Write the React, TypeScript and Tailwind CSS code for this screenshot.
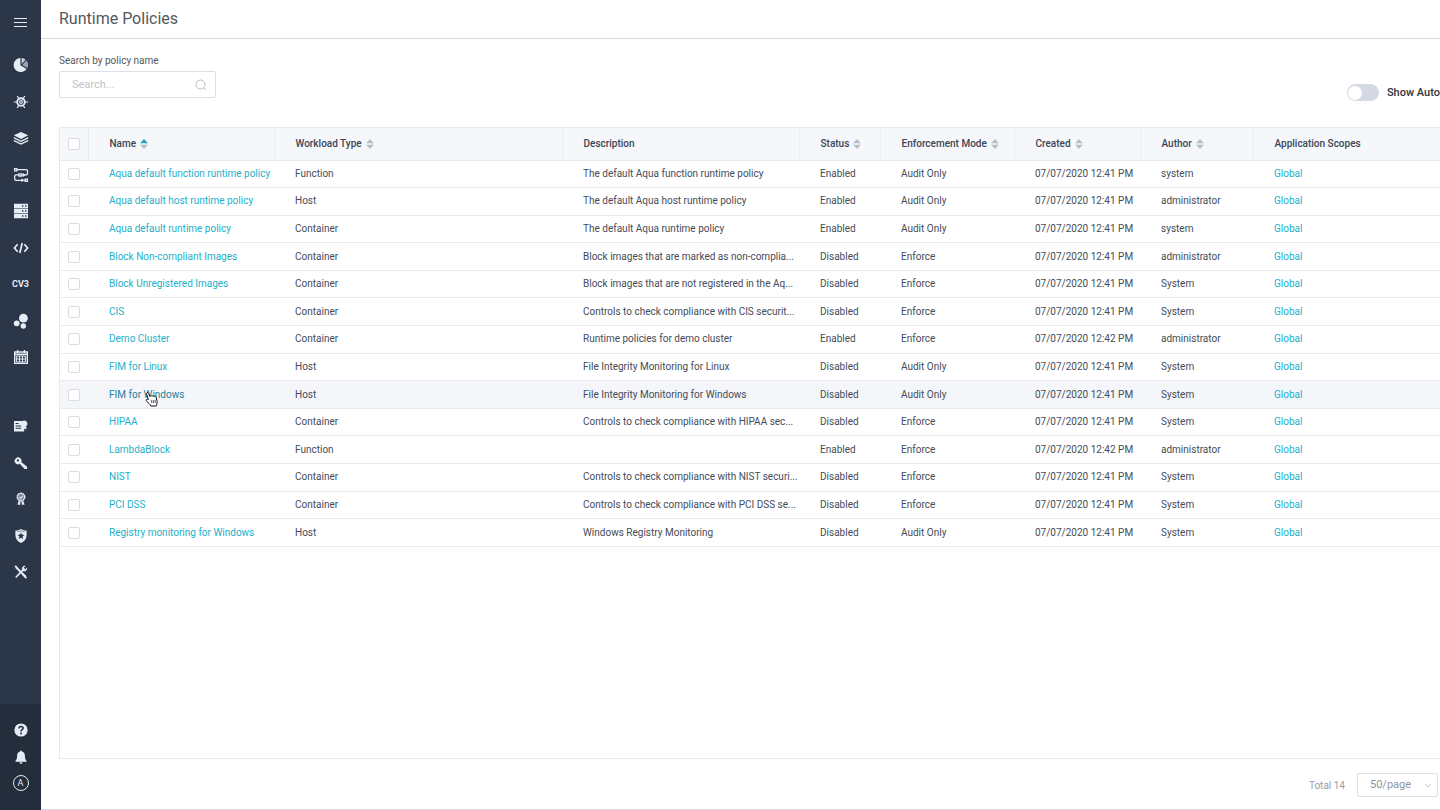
import { ReactNode, useState } from "react"

interface Policy {
  name: string
  workload: string
  description: string
  enabled: boolean
  mode: string
  created: string
  author: string
}

interface Column {
  label: string
  width: string
  sort?: "none" | "asc"
}

const EARLY = "07/07/2020 12:41 PM"
const LATE = "07/07/2020 12:42 PM"

const columns: Column[] = [
  { label: "Name", width: "w-[186px]", sort: "asc" },
  { label: "Workload Type", width: "w-[288px]", sort: "none" },
  { label: "Description", width: "w-[237px]" },
  { label: "Status", width: "w-[81px]", sort: "none" },
  { label: "Enforcement Mode", width: "w-[134px]", sort: "none" },
  { label: "Created", width: "w-[126px]", sort: "none" },
  { label: "Author", width: "w-[113px]", sort: "none" },
  { label: "Application Scopes", width: "w-auto" },
]

const policies: Policy[] = [
  { name: "Aqua default function runtime policy", workload: "Function", description: "The default Aqua function runtime policy", enabled: true, mode: "Audit Only", created: EARLY, author: "system" },
  { name: "Aqua default host runtime policy", workload: "Host", description: "The default Aqua host runtime policy", enabled: true, mode: "Audit Only", created: EARLY, author: "administrator" },
  { name: "Aqua default runtime policy", workload: "Container", description: "The default Aqua runtime policy", enabled: true, mode: "Audit Only", created: EARLY, author: "system" },
  { name: "Block Non-compliant Images", workload: "Container", description: "Block images that are marked as non-complia...", enabled: false, mode: "Enforce", created: EARLY, author: "administrator" },
  { name: "Block Unregistered Images", workload: "Container", description: "Block images that are not registered in the Aq...", enabled: false, mode: "Enforce", created: EARLY, author: "System" },
  { name: "CIS", workload: "Container", description: "Controls to check compliance with CIS securit...", enabled: false, mode: "Enforce", created: EARLY, author: "System" },
  { name: "Demo Cluster", workload: "Container", description: "Runtime policies for demo cluster", enabled: true, mode: "Enforce", created: LATE, author: "administrator" },
  { name: "FIM for Linux", workload: "Host", description: "File Integrity Monitoring for Linux", enabled: false, mode: "Audit Only", created: EARLY, author: "System" },
  { name: "FIM for Windows", workload: "Host", description: "File Integrity Monitoring for Windows", enabled: false, mode: "Audit Only", created: EARLY, author: "System" },
  { name: "HIPAA", workload: "Container", description: "Controls to check compliance with HIPAA sec...", enabled: false, mode: "Enforce", created: EARLY, author: "System" },
  { name: "LambdaBlock", workload: "Function", description: "", enabled: true, mode: "Enforce", created: LATE, author: "administrator" },
  { name: "NIST", workload: "Container", description: "Controls to check compliance with NIST securi...", enabled: false, mode: "Enforce", created: EARLY, author: "System" },
  { name: "PCI DSS", workload: "Container", description: "Controls to check compliance with PCI DSS se...", enabled: false, mode: "Enforce", created: EARLY, author: "System" },
  { name: "Registry monitoring for Windows", workload: "Host", description: "Windows Registry Monitoring", enabled: false, mode: "Audit Only", created: EARLY, author: "System" },
]

const HOVERED = "FIM for Windows"

function Icon({ children }: { children: ReactNode }) {
  return (
    <svg viewBox="0 0 16 16" className="h-4 w-4" fill="currentColor" aria-hidden="true">
      {children}
    </svg>
  )
}

const mainNav = [
  {
    label: "Dashboard",
    icon: (
      <Icon>
        <path d="M7.4.9A7.1 7.1 0 1 0 13.6 12L7.4 8.2z" />
        <path d="M8.6.9v6.2l4-4.4A7 7 0 0 0 8.6.9z" opacity=".85" />
        <path d="M13.4 3.5 9.2 8l5.1 3A7 7 0 0 0 13.4 3.5z" opacity=".6" />
      </Icon>
    ),
  },
  {
    label: "Risk Explorer",
    icon: (
      <Icon>
        <g fill="none" stroke="currentColor">
          <circle cx="8" cy="8" r="3.8" strokeWidth="1.9" />
          <circle cx="8" cy="8" r="1.4" strokeWidth="1.1" />
          <path d="M.8 8h3M12.2 8h3M4.2 2l1.6 2.6M11.8 2l-1.6 2.6M4.2 14l1.6-2.6M11.8 14l-1.6-2.6" strokeWidth="1.2" />
        </g>
      </Icon>
    ),
  },
  {
    label: "Images",
    icon: (
      <Icon>
        <path d="M8 2 15.2 5.3 8 8.9.8 5.3z" />
        <path d="M.8 7 8 10.5 15.2 7v1.6L8 12 .8 8.6z" />
        <path d="M.8 9.7 8 13.2l7.2-3.5v1.5L8 14.7.8 11.2z" />
      </Icon>
    ),
  },
  {
    label: "Functions",
    icon: (
      <Icon>
        <g fill="none" stroke="currentColor" strokeWidth="1.3">
          <path d="M1.6 1.6h2.2v2.2H1.6zM6 6.8h2.8V9H6zM12.2 12.2h2.2v2.2h-2.2z" />
          <path d="M4 2.7h9.2a1.3 1.3 0 0 1 1.3 1.3v2.6a1.3 1.3 0 0 1-1.3 1.3H9M6 7.9H3a1.3 1.3 0 0 0-1.3 1.3V12A1.3 1.3 0 0 0 3 13.3h9" />
        </g>
        <path d="M10 5.9v4l2.6-2zM8.4 11.3v4l2.6-2z" />
      </Icon>
    ),
  },
  {
    label: "Infrastructure",
    icon: (
      <Icon>
        <path fillRule="evenodd" d="M1 .8h14v4.4H1zM9 2.3v1.4h1.4V2.3zM12 2.3v1.4h1.4V2.3z" />
        <path fillRule="evenodd" d="M1 5.8h14v4.4H1zM9 7.3v1.4h1.4V7.3zM12 7.3v1.4h1.4V7.3z" />
        <path fillRule="evenodd" d="M1 10.8h14v4.4H1zM9 12.3v1.4h1.4v-1.4zM12 12.3v1.4h1.4v-1.4z" />
      </Icon>
    ),
  },
  {
    label: "Code Repositories",
    icon: (
      <Icon>
        <path d="M4.7 4.2 1.4 8l3.3 3.8M11.3 4.2 14.6 8l-3.3 3.8M9.2 3 6.8 13" fill="none" stroke="currentColor" strokeWidth="1.7" />
      </Icon>
    ),
  },
  {
    label: "Vulnerabilities",
    icon: <span className="text-[9px] leading-4 font-bold">CV3</span>,
  },
  {
    label: "Workloads",
    icon: (
      <Icon>
        <circle cx="10.4" cy="5.2" r="4.4" />
        <circle cx="3.7" cy="10.3" r="2.9" />
        <circle cx="10.3" cy="13" r="2.7" />
      </Icon>
    ),
  },
  {
    label: "Audit",
    icon: (
      <Icon>
        <path d="M1.7 3h12.6v11.4H1.7zM1.7 5.2h12.6M4.6 1v3M11.4 1v3" fill="none" stroke="currentColor" strokeWidth="1.4" />
        <path d="M3.6 7h8.8v6H3.6zM3.6 10h8.8M6.5 7v6M9.5 7v6" fill="none" stroke="currentColor" strokeWidth="1" />
      </Icon>
    ),
  },
]

const settingsNav = [
  {
    label: "Policies",
    icon: (
      <Icon>
        <path
          fillRule="evenodd"
          d="M1 3h8.6a3.2 3.2 0 1 1 1.6 6v4.6H1zM2.6 5v1h3V5zM2.6 7.4v1h5.6v-1zM2.6 9.8v1h5.6v-1z"
        />
        <path d="M10.4 8.4h3v3.2l-1.5-1-1.5 1z" />
      </Icon>
    ),
  },
  {
    label: "Secrets",
    icon: (
      <Icon>
        <path
          fillRule="evenodd"
          d="M2.8 3.5a3.3 3.3 0 0 1 5.5 3.4l5.8 4.9v2.3h-2.5l-4.9-5.3a3.3 3.3 0 0 1-3.9-5.3zM4.2 4.6a1.1 1.1 0 1 0 1.6 1.5 1.1 1.1 0 0 0-1.6-1.5z"
        />
      </Icon>
    ),
  },
  {
    label: "Compliance",
    icon: (
      <Icon>
        <circle cx="8" cy="6" r="3.7" fill="none" stroke="currentColor" strokeWidth="1.5" strokeDasharray="2 .3" />
        <path d="M6.3 6l1.3 1.3 2.2-2.4" fill="none" stroke="currentColor" strokeWidth="1.1" />
        <circle cx="8" cy="6" r="3" opacity=".45" />
        <path d="M5.4 10.3h2.1L7.1 14.3l-1-.9-1.6.6zM8.5 10.3h2.1l.9 3.7-1.6-.6-1 .9z" />
      </Icon>
    ),
  },
  {
    label: "Runtime Protection",
    icon: (
      <Icon>
        <path
          fillRule="evenodd"
          d="M8 .9c1.8 1.2 3.6 1.5 5.6 1.5v4.8c0 3.8-2.3 6.3-5.6 7.9-3.3-1.6-5.6-4.1-5.6-7.9V2.4c2 0 3.8-.3 5.6-1.5zM8 2.5c-1.3.8-2.7 1.1-4.2 1.2v.4c1.5-.1 2.9-.4 4.2-1.1 1.3.7 2.7 1 4.2 1.1v-.4C10.7 3.6 9.3 3.3 8 2.5zM8 4.4 7 6.6l-2.4.3 1.8 1.6L5.9 11 8 9.7l2.1 1.3-.5-2.5 1.8-1.6L9 6.6z"
        />
      </Icon>
    ),
  },
  {
    label: "Administration",
    icon: (
      <Icon>
        <path d="M3 3.2l9.6 9.6" fill="none" stroke="currentColor" strokeWidth="2" />
        <path d="M11 4.8 3.2 13" fill="none" stroke="currentColor" strokeWidth="1.7" strokeLinecap="round" />
        <path d="M12.6 1.9 10.7 3.7v1.6h1.7l1.7-1.8a3 3 0 0 1-4.5 3.3 3 3 0 0 1 3-4.9zM1.4 2.4l1.5-1.1 2 2.5-1 1z" />
        <path d="M10 9l4 4.5-1.2 1.2L8.7 10.4z" />
      </Icon>
    ),
  },
]

const accountNav = [
  {
    label: "Help",
    icon: (
      <Icon>
        <circle cx="8" cy="8" r="6.6" />
        <path d="M6 6.4c0-2.6 4.1-2.5 4.1-.2C10.1 7.7 8 7.6 8 9.4" fill="none" stroke="#242d3b" strokeWidth="1.6" />
        <circle cx="8" cy="11.5" r="1" fill="#242d3b" />
      </Icon>
    ),
  },
  {
    label: "Notifications",
    icon: (
      <Icon>
        <path d="M8 1.5c.6 0 .9.4.9 1 2 .4 3 2 3 4.2 0 2.8.5 4 1.7 5.2v.8H2.4v-.8C3.6 10.7 4.1 9.5 4.1 6.7c0-2.2 1-3.8 3-4.2 0-.6.3-1 .9-1zM6.5 13.2h3a1.5 1.5 0 0 1-3 0z" />
      </Icon>
    ),
  },
  {
    label: "Account",
    icon: <span className="flex h-4 w-4 items-center justify-center rounded-full border border-current text-[9px] leading-4">A</span>,
  },
]

function NavGroup({ items, className }: { items: { label: string; icon: ReactNode }[]; className: string }) {
  return (
    <ul className={`flex flex-col items-center justify-between ${className}`}>
      {items.map((item) => (
        <li key={item.label} className="h-4">
          <a href="#" aria-label={item.label} className="flex h-4 items-center justify-center">
            {item.icon}
          </a>
        </li>
      ))}
    </ul>
  )
}

function SortIcon({ active }: { active: boolean }) {
  return (
    <svg viewBox="0 0 8 10" className="h-[10px] w-2" aria-hidden="true">
      <path d="M4 0 8 4.2H0z" fill={active ? "#1ea3b8" : "#b9bdc8"} />
      <path d="M4 10 0 5.8h8z" fill="#b9bdc8" />
    </svg>
  )
}

function Checkbox({ label }: { label: string }) {
  return (
    <input
      type="checkbox"
      aria-label={label}
      className="mx-auto block h-3 w-3 appearance-none rounded-xs border border-[#d9dce3] bg-white checked:bg-[#1eb1c7]"
    />
  )
}

function HandCursor() {
  return (
    <svg viewBox="0 0 14 16" className="pointer-events-none absolute top-1 left-9 h-4 w-[14px]" aria-hidden="true">
      <path
        d="M3.3 8.6 1.7 3.2C1.2 1.3 3 .8 3.6 2.3l1.3 3.2c.3-1 1.7-1 2.1-.1.5-.8 1.7-.7 2.1.2.7-.7 1.9-.3 2.1.8l.8 3.4c.4 2-.3 2.9-.8 5.2H5.8C5.1 13 3.3 11.9 1.7 10.3c-1.3-1.3.1-2.8 1.6-1.7z"
        fill="#fff"
        stroke="#111"
        strokeWidth="1"
        strokeLinejoin="round"
      />
      <path d="M6.4 9.2l.5 3M8.2 9l.4 3M10 8.8l.3 3" fill="none" stroke="#111" strokeWidth=".7" />
    </svg>
  )
}

function Sidebar() {
  return (
    <nav className="flex w-[41px] shrink-0 flex-col bg-[#2b3648] text-[#e6ecf6]">
      <button type="button" aria-label="Toggle menu" className="flex h-[45px] items-center justify-center">
        <svg viewBox="0 0 14 11" className="h-[11px] w-[14px]" aria-hidden="true">
          <path d="M0 1.5h13M0 5.5h13M0 9.5h13" stroke="currentColor" strokeWidth="1.2" />
        </svg>
      </button>
      <NavGroup items={mainNav} className="mt-3 h-[308px]" />
      <NavGroup items={settingsNav} className="mt-[53px] h-[162px]" />
      <div className="mt-auto bg-[#242d3b] pt-[18px] pb-[19px]">
        <NavGroup items={accountNav} className="h-[69px]" />
      </div>
    </nav>
  )
}

function PolicyTable() {
  return (
    <table className="h-[419px] w-full table-fixed border-collapse text-left text-[10px] leading-4">
      <thead>
        <tr className="h-8 border-b border-[#e6eaf2] bg-[#f5f7fa] text-[#3b4656]">
          <th className="w-7 border-r border-[#e6eaf2]">
            <Checkbox label="Select all policies" />
          </th>
          {columns.map((col) => (
            <th key={col.label} className={`${col.width} border-r border-[#e9edf4] pl-[21px] font-medium whitespace-nowrap last:border-r-0`}>
              {col.sort ? (
                <button type="button" className="flex items-center gap-1">
                  {col.label}
                  <SortIcon active={col.sort === "asc"} />
                </button>
              ) : (
                col.label
              )}
            </th>
          ))}
        </tr>
      </thead>
      <tbody className="text-[#454c58]">
        {policies.map((policy) => {
          const hovered = policy.name === HOVERED
          return (
            <tr key={policy.name} className={`border-b border-[#e8ebf2] ${hovered ? "bg-[#f4f6fa]" : "bg-white"}`}>
              <td>
                <Checkbox label={`Select ${policy.name}`} />
              </td>
              <td className="pl-[21px] whitespace-nowrap">
                <div className="relative">
                  <a href="#" className={hovered ? "text-[#26809a]" : "text-[#23b0c9]"}>
                    {policy.name}
                  </a>
                  {hovered && <HandCursor />}
                </div>
              </td>
              <td className="pl-[21px]">{policy.workload}</td>
              <td className="pl-[21px] whitespace-nowrap">{policy.description}</td>
              <td className="pl-[21px]">{policy.enabled ? "Enabled" : "Disabled"}</td>
              <td className="pl-[21px]">{policy.mode}</td>
              <td className="pl-[21px] whitespace-nowrap">{policy.created}</td>
              <td className="pl-[21px]">{policy.author}</td>
              <td className="pl-[21px]">
                <a href="#" className="text-[#23b0c9]">Global</a>
              </td>
            </tr>
          )
        })}
      </tbody>
    </table>
  )
}

export default function App() {
  const [search, setSearch] = useState("")

  return (
    <div className="flex min-h-screen bg-white font-['Roboto',sans-serif]">
      <Sidebar />
      <main className="flex min-w-0 flex-1 flex-col overflow-hidden border-b border-[#dcdcdc]">
        <header className="flex h-[39px] items-center border-b border-[#d4d6da] pl-[18px]">
          <h1 className="text-base text-[#55585e]">Runtime Policies</h1>
        </header>

        <div className="flex items-start justify-between pt-[14px] pl-[18px]">
          <div>
            <label htmlFor="search" className="block text-[10px] leading-4 text-[#55585e]">
              Search by policy name
            </label>
            <div className="mt-[2px] flex h-[27px] w-[157px] items-center rounded-xs border border-[#dcdfe6] pr-2 pl-3">
              <input
                id="search"
                type="text"
                placeholder="Search..."
                value={search}
                onChange={(e) => setSearch(e.target.value)}
                className="h-full min-w-0 flex-1 text-[11px] text-[#55585e] outline-none placeholder:text-[#bfc3cc]"
              />
              <svg viewBox="0 0 12 12" className="h-3 w-3" fill="none" stroke="#b9bdc6" aria-hidden="true">
                <circle cx="5.5" cy="5.5" r="4.5" />
                <path d="M8.7 8.7 10.7 10.7" />
              </svg>
            </div>
          </div>
          <label className="mt-[31px] flex items-center gap-2 text-[11px] leading-4 font-medium whitespace-nowrap text-[#303640]">
            <input
              type="checkbox"
              role="switch"
              className="flex h-[17px] w-8 appearance-none items-center rounded-full bg-[#d5d9e3] px-px before:h-[14px] before:w-[14px] before:rounded-full before:bg-white checked:justify-end"
            />
            Show Auto
          </label>
        </div>

        <section className="mt-[26px] ml-[18px] flex-1 border-t border-b border-l border-[#e6e8ee]">
          <PolicyTable />
        </section>

        <footer className="flex h-[50px] items-center justify-end gap-3 pt-[2px] pr-[2px] text-[#9a9da8]">
          <span className="text-[10px]">Total 14</span>
          <div className="relative text-[11px]">
            <select
              aria-label="Rows per page"
              className="h-6 w-[81px] appearance-none rounded-xs border border-[#dcdfe6] bg-white pl-3 text-[#8f939e]"
            >
              <option>50/page</option>
            </select>
            <svg viewBox="0 0 8 6" className="pointer-events-none absolute top-[10px] right-[6px] h-[6px] w-2" aria-hidden="true">
              <path d="M1 1l3 3 3-3" fill="none" stroke="#c0c4cc" />
            </svg>
          </div>
        </footer>
      </main>
    </div>
  )
}
